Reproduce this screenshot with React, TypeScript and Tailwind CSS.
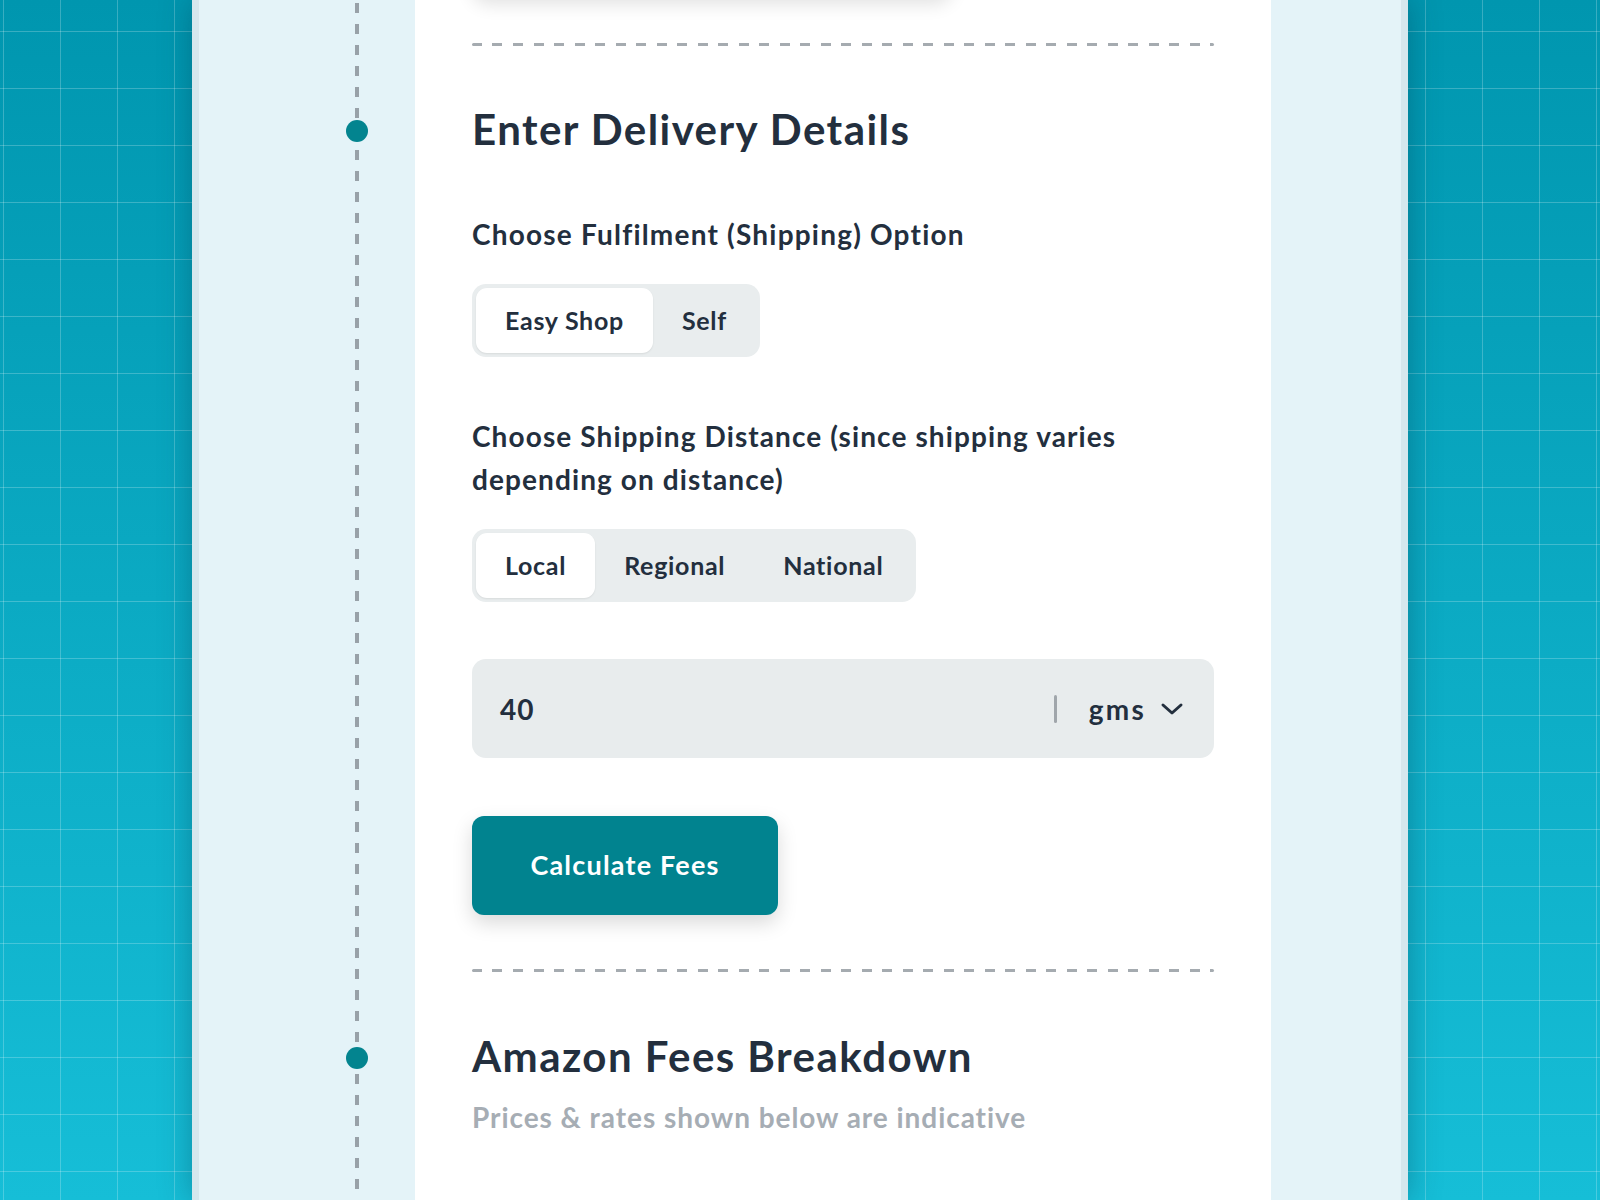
import React from 'react'

type Option = { label: string; active?: boolean }

const gridLines =
  'bg-[linear-gradient(to_right,rgba(255,255,255,0.22)_1px,transparent_1px),linear-gradient(to_bottom,rgba(255,255,255,0.22)_1px,transparent_1px)] bg-size-[57px_57px]'

function Segmented({ options }: { options: Option[] }) {
  return (
    <div className="inline-flex rounded-[14px] bg-[#e9edee] p-[4px]">
      {options.map((o) => (
        <button
          key={o.label}
          className={
            o.active
              ? 'h-[65px] rounded-[11px] bg-white px-[29px] text-[25px] font-bold tracking-[0.7px] text-[#232f3e] shadow-[0_1px_2px_rgba(0,0,0,0.08)]'
              : 'h-[65px] rounded-[11px] px-[29px] text-[25px] font-bold tracking-[0.7px] text-[#232f3e]'
          }
        >
          {o.label}
        </button>
      ))}
    </div>
  )
}

function Dashed() {
  return (
    <div className="h-[3px] w-full rounded-full bg-[repeating-linear-gradient(to_right,#a5abb0_0_10px,transparent_10px_20.5px)]" />
  )
}

// heading row: dot sits on the rail, text sits in the card
function SectionTitle({ children }: { children: React.ReactNode }) {
  return (
    <div className="flex items-center">
      <div className="flex w-[216px] shrink-0">
        <span className="relative z-10 ml-[147px] mt-[4px] h-[22px] w-[22px] rounded-full bg-[#03848f]" />
      </div>
      <h2 className="pl-[57px] text-[42px] font-bold leading-[48px] tracking-[1.45px] text-[#232f3e]">{children}</h2>
    </div>
  )
}

export default function App() {
  return (
    <div className="flex h-[1200px] overflow-hidden bg-[linear-gradient(to_bottom,#0096af,#16bed7)] font-['Lato',sans-serif] text-[#232f3e]">
      <div className={`w-[192px] shrink-0 bg-position-[3px_31px] ${gridLines}`} />

      {/* phone-ish frame */}
      <div className="relative z-10 w-[1216px] shrink-0 border-x-[7px] border-[#d5e7ed] bg-[linear-gradient(to_right,#e4f3f8_216px,#ffffff_216px,#ffffff_1072px,#e4f3f8_1072px)] shadow-[0_0_30px_rgba(0,50,70,0.35)]">
        {/* rail line */}
        <div className="absolute bottom-0 left-[156px] top-[3px] w-[4px] bg-[repeating-linear-gradient(to_bottom,#98a1a8_0_10px,transparent_10px_21px)]" />

        <div className="relative ml-[273px] w-[742px] pt-[43px]">
          {/* bottom edge of the previous card peeking in */}
          <div className="h-0">
            <div className="h-[40px] w-[480px] -translate-y-[85px] rounded-2xl bg-white shadow-[0_6px_18px_rgba(0,0,0,0.12)]" />
          </div>
          <Dashed />
        </div>

        <div className="mt-[59px]">
          <SectionTitle>Enter Delivery Details</SectionTitle>
        </div>

        <div className="ml-[273px] w-[742px]">
          <p className="mt-[64px] text-[28px] font-bold leading-[34px] tracking-[1.2px]">Choose Fulfilment (Shipping) Option</p>
          <div className="mt-[33px]">
            <Segmented options={[{ label: 'Easy Shop', active: true }, { label: 'Self' }]} />
          </div>

          <p className="mt-[58px] text-[28px] font-bold leading-[43px] tracking-[1.1px]">
            Choose Shipping Distance (since shipping varies
            <br />
            depending on distance)
          </p>
          <div className="mt-[28px]">
            <Segmented options={[{ label: 'Local', active: true }, { label: 'Regional' }, { label: 'National' }]} />
          </div>

          <div className="mt-[57px] flex h-[99px] items-center rounded-[14px] bg-[#e8eced] pl-[28px] pr-[30px]">
            <span className="flex-1 text-[28px] font-bold tracking-[1px]">40</span>
            <span className="h-[28px] w-[3px] rounded-full bg-[#a0a6ab]" />
            <span className="ml-[32px] text-[28px] font-bold tracking-[2.2px]">gms</span>
            <svg className="ml-[14px]" width="24" height="14" viewBox="0 0 24 14" fill="none">
              <polyline points="3,3 12,11 21,3" stroke="#232f3e" strokeWidth="3" strokeLinecap="round" strokeLinejoin="round" />
            </svg>
          </div>

          <button className="mt-[58px] h-[99px] w-[306px] rounded-[12px] bg-[#01838f] text-[27px] font-bold tracking-[1.2px] text-white shadow-[0_8px_20px_rgba(0,0,0,0.15)]">
            Calculate Fees
          </button>

          <div className="mt-[54px]">
            <Dashed />
          </div>
        </div>

        <div className="mt-[60px]">
          <SectionTitle>Amazon Fees Breakdown</SectionTitle>
        </div>
        <p className="ml-[273px] mt-[20px] text-[28px] font-bold leading-[34px] tracking-[0.95px] text-[#a6adb4]">
          Prices &amp; rates shown below are indicative
        </p>
      </div>

      <div className={`flex-1 bg-position-[17px_31px] ${gridLines}`} />
    </div>
  )
}
